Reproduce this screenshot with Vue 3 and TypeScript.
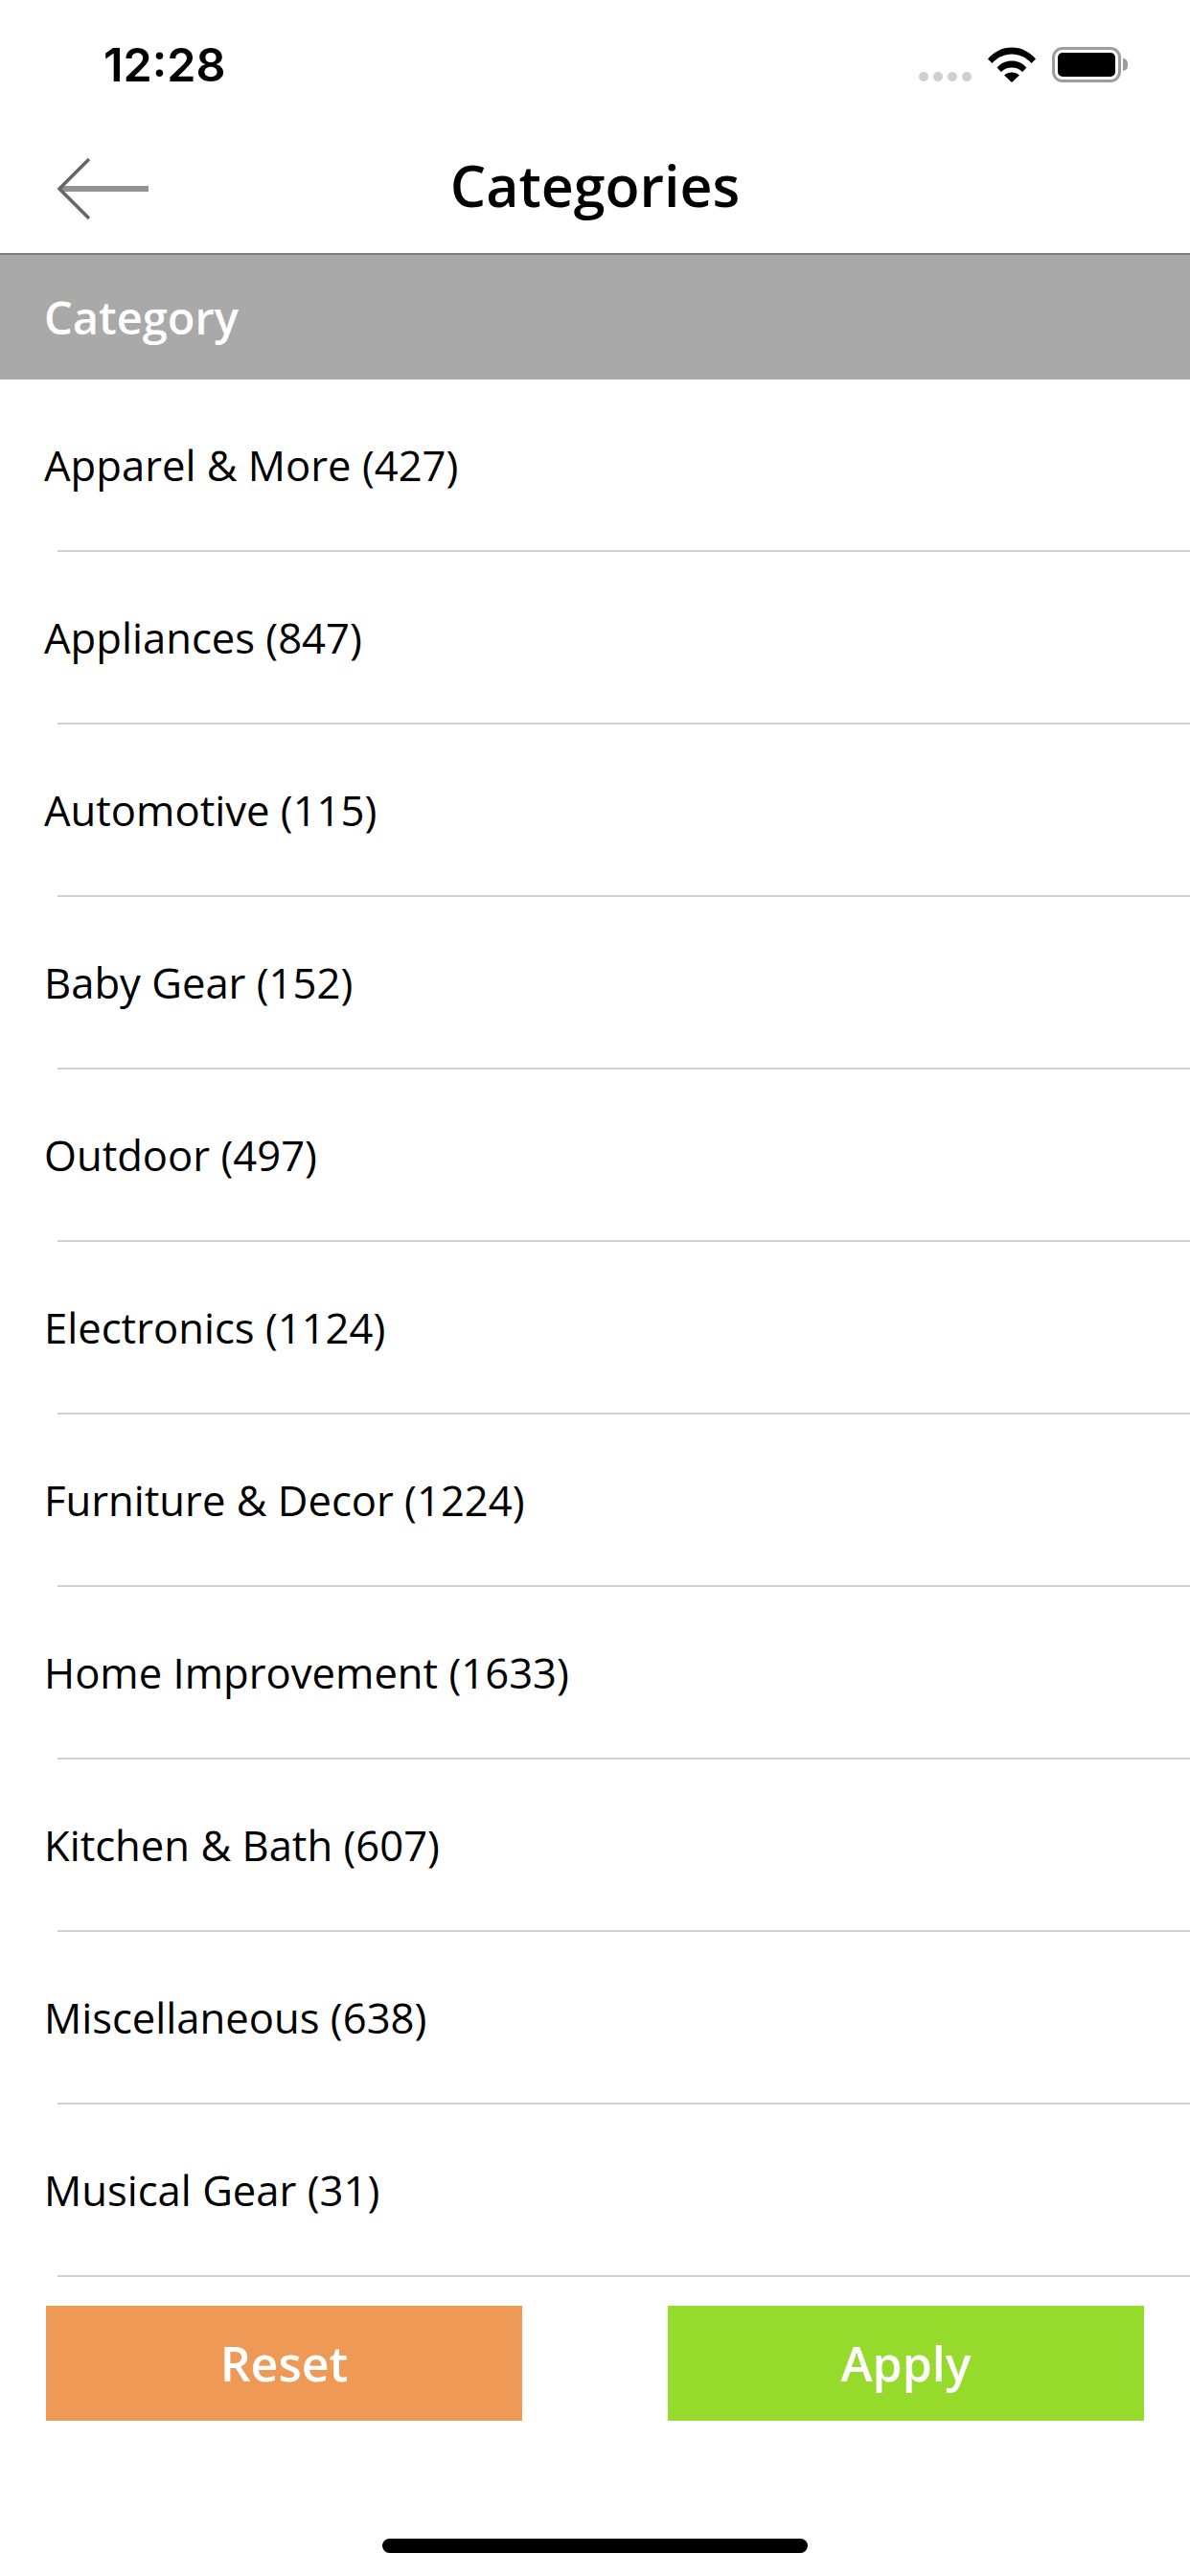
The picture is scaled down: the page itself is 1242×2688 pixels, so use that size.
<script setup lang="ts">
/**
 * Category filter screen: status bar, nav bar, category list and the
 * Reset / Apply actions.
 */
interface Category {
  name: string
  count: number
}

const categories: Category[] = [
  { name: 'Apparel & More', count: 427 },
  { name: 'Appliances', count: 847 },
  { name: 'Automotive', count: 115 },
  { name: 'Baby Gear', count: 152 },
  { name: 'Outdoor', count: 497 },
  { name: 'Electronics', count: 1124 },
  { name: 'Furniture & Decor', count: 1224 },
  { name: 'Home Improvement', count: 1633 },
  { name: 'Kitchen & Bath', count: 607 },
  { name: 'Miscellaneous', count: 638 },
  { name: 'Musical Gear', count: 31 },
]
</script>

<template>
  <div class="screen">
    <div class="status-bar">
      <span class="time">12:28</span>
      <div class="status-icons">
        <div class="signal">
          <i v-for="n in 4" :key="n" />
        </div>
        <svg class="wifi" width="50" height="37" viewBox="0 0 50 37">
          <path d="M0 12.5C6.5 5 15 0.5 25 0.5S43.500 5 50 12.500L45.500 17C40 11 33 7.500 25 7.500S10 11 4.500 17Z" />
          <path d="M9.500 21.500C13.500 17 19 14.500 25 14.500S36.500 17 40.500 21.500L36 26C33 22.800 29.200 21.500 25 21.500S17 22.800 14 26Z" />
          <path d="M25 37L17 29.500C19 27.500 22 26.500 25 26.500S31 27.500 33 29.500Z" />
        </svg>
        <div class="battery">
          <div class="battery-fill" />
        </div>
      </div>
    </div>

    <header class="nav-bar">
      <svg class="back" width="98" height="66" viewBox="0 0 98 66">
        <path class="back-shaft" d="M3 33H96" />
        <path class="back-head" d="M34 2L3 33L34 64" />
      </svg>
      <h1 class="title">Categories</h1>
    </header>

    <div class="section-head">Category</div>

    <ul class="list">
      <li v-for="c in categories" :key="c.name" class="item">
        <span class="item-label">{{ c.name }} ({{ c.count }})</span>
        <div class="item-line" />
      </li>
    </ul>

    <div class="actions">
      <button class="btn btn-reset" type="button">Reset</button>
      <button class="btn btn-apply" type="button">Apply</button>
    </div>

    <div class="home-bar" />
  </div>
</template>

<style>
body {
  background: #fff;
}
</style>

<style scoped>
.screen {
  width: 1242px;
  height: 2688px;
  display: flex;
  flex-direction: column;
  background: #fff;
  font-family: "Open Sans", "Noto Sans", sans-serif;
  overflow: hidden;
}

.status-bar {
  height: 132px;
  flex: none;
  display: flex;
  justify-content: space-between;
  padding: 49px 72px 0 108px;
  box-sizing: border-box;
}

.time {
  font-family: Inter, Roboto, sans-serif;
  font-size: 48.5px;
  line-height: 37px;
  font-weight: 600;
  color: #000;
}

.status-icons {
  display: flex;
  align-items: flex-start;
}

.signal {
  display: flex;
  gap: 5px;
  margin: 26px 17px 0 0;
}

.signal i {
  width: 10px;
  height: 10px;
  border-radius: 50%;
  background: #cfcfcf;
}

.wifi {
  fill: #000;
  margin-right: 17px;
}

.battery {
  position: relative;
  width: 72px;
  height: 37px;
  box-sizing: border-box;
  border: 3px solid #9d9d9d;
  border-radius: 11px;
  padding: 3px;
}

.battery::after {
  content: "";
  position: absolute;
  right: -10px;
  top: 9px;
  width: 5px;
  height: 13px;
  border-radius: 0 6px 6px 0;
  background: #9d9d9d;
}

.battery-fill {
  height: 100%;
  background: #000;
  border-radius: 5px;
}

.nav-bar {
  height: 132px;
  flex: none;
  position: relative;
  display: flex;
  align-items: center;
  justify-content: center;
  padding-bottom: 10px;
  box-sizing: border-box;
}

.back {
  position: absolute;
  left: 59px;
  top: 32px;
  fill: none;
}

.back-shaft {
  stroke: #929292;
  stroke-width: 6;
}

.back-head {
  stroke: #666;
  stroke-width: 3.5;
}

.title {
  margin: 0;
  font-size: 59px;
  font-weight: 600;
  color: #000;
}

.section-head {
  height: 132px;
  flex: none;
  box-sizing: border-box;
  border-top: 2px solid #7d7d7d;
  display: flex;
  align-items: center;
  padding-left: 46px;
  background: #a9a9a9;
  color: #fff;
  font-size: 47px;
  font-weight: 600;
}

.list {
  list-style: none;
  margin: 0;
  padding: 0;
}

.item-label {
  display: flex;
  align-items: center;
  height: 178px;
  padding-left: 46px;
  font-size: 43.6px;
  color: #000;
}

.item-line {
  height: 2px;
  margin-left: 60px;
  background: #d0d0d0;
}

.actions {
  display: flex;
  justify-content: space-between;
  padding: 30px 48px 0;
}

.btn {
  width: 497px;
  height: 120px;
  border: 0;
  padding: 0;
  color: #fff;
  font-family: inherit;
  font-size: 50px;
  font-weight: 600;
}

.btn-reset {
  background: #ee9955;
}

.btn-apply {
  background: #96db2b;
}

.home-bar {
  width: 444px;
  height: 15px;
  margin: 123px auto 0;
  border-radius: 8px;
  background: #000;
}
</style>
